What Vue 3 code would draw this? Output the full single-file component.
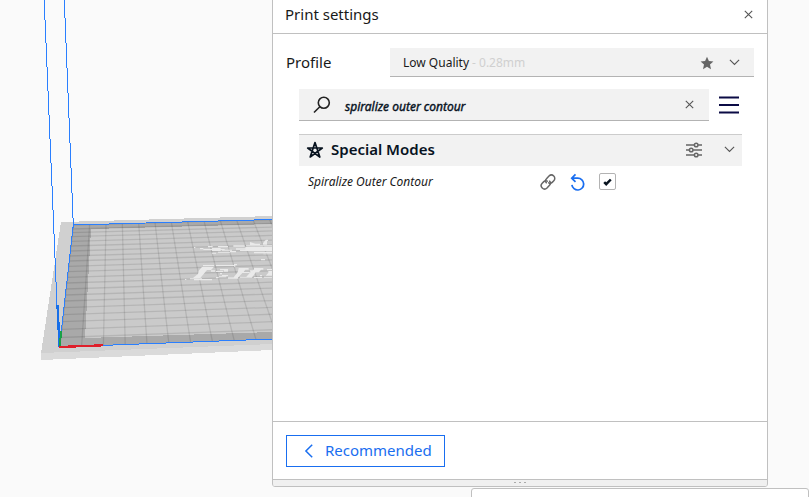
<script setup>
const rowYs = [225, 229, 232.7, 236.7, 241.3, 246, 251, 256, 261, 266.3, 271.7, 277.3, 283, 289, 295, 301, 307.7, 314.7, 321.7, 329.3, 337.5]
const rows = rowYs.map((y) => ({
  x1: 73 - ((y - 225) / 122) * 13.5,
  y1: y,
  x2: 272,
  y2: 219.5 + (y - 225) * 0.98
}))
const cols = Array.from({ length: 13 }, (_, k) => ({
  x1: 73.3 + 16.35 * k,
  y1: 225 - 0.45 * k,
  x2: 59.8 + 21.8 * k,
  y2: 347 - 0.82 * k
}))
</script>

<template>
  <div class="stage">
    <svg class="viewport" width="273" height="497" viewBox="0 0 273 497">
      <g shape-rendering="crispEdges">
        <polygon points="41,352 273,343 273,350 41,360" fill="#dadada" />
        <polygon points="61,222 273,216 273,344 41,353" fill="#d0d0d0" />
        <polygon points="73,225 273,219.5 273,339 59.5,347" fill="#a9a9a9" />
        <polygon points="91,229 273,224 273,332 85,338" fill="#cacaca" />
      </g>
      <clipPath id="bed"><polygon points="73,225 273,219.5 273,339 59.5,347" /></clipPath>
      <g clip-path="url(#bed)" stroke="#000" stroke-opacity="0.1" stroke-width="1.3">
        <line v-for="(l, i) in rows" :key="'r' + i" v-bind="l" />
        <line v-for="(l, i) in cols" :key="'c' + i" v-bind="l" />
      </g>
      <g transform="translate(150 200) scale(.33333)" fill="#eaeaea">
        <path d="M132 141h4v3h-4zM150 144h10v4h-10zM174 138h14v4h-14zM204 138h30v4h-30zM160 147h64v3h-64zM186 144h26v9h-26zM186 158h12v3h-12zM204 155h36v3h-36zM216 149h30v3h-30zM240 153h18v4h-18zM250 136h34v4h-34zM258 145h30v4h-30zM270 150h96v3h-96zM286 141h80v9h-80zM300 126l16 5v4h-16zM316 131h14v4h-14zM338 131l6-8 4-4h6v4h-3v11h-13zM288 136h78v3h-78zM312 156h54v4h-54zM340 161h26v2h-26zM333 177h12v4h-12z" />
        <path d="M159 195h33v4h-33zM198 195h54v3h-54zM252 192h9v4h-5v4h-4zM156 201h36l-9 9h-12l-20 24h-22l15-12 2-10zM105 237h4v3h-4zM120 235h36v3h-36zM132 237h54v4h-54zM183 211h12v4h-12zM210 207h24v4h-24zM198 213h22v3h-22zM222 211h12v4h-12zM210 219h6v4h-6zM216 225h18v3h-18zM198 231h8v4h-8zM207 229h22v3h-22zM234 232h30v4h-30zM266 204h30v5h-10l-5 6h18v4h-22l-12 13h-14l12-15zM300 211h12v4h-12zM312 204h28v5h-7l-6 8h-10l-9 13h-19l13-14 10-8zM330 225h6v4h-6zM270 230h36v3h-36zM312 231h24v3h-24zM351 207h15v4h-15zM355 213h11v14h-19l8-9zM342 230h24v3h-24z" />
      </g>
      <g fill="none" stroke="#2a7fff" stroke-width="1" shape-rendering="crispEdges">
        <path d="M44.2 0L58.7 346M64.3 0L73.3 225L59.5 347L273 339M73 225L273 219.5" />
      </g>
      <g fill="none" shape-rendering="crispEdges">
        <path d="M57.5 305L59.5 347" stroke="#176fe8" stroke-width="2.4" />
        <path d="M61 331L60 346" stroke="#1aa146" stroke-width="2" />
        <path d="M59 347L103 345.3" stroke="#df1f2b" stroke-width="2.3" />
      </g>
    </svg>

    <section class="panel">
      <header class="head">
        <span class="title">Print settings</span>
        <svg width="9" height="9" viewBox="0 0 9 9" class="line"><path d="M.8.8l7.4 7.4M8.2.8L.8 8.2" /></svg>
      </header>
      <main class="body">
        <div class="profile">
          <span class="label">Profile</span>
          <div class="combo">
            <span class="quality">Low Quality</span><span class="layer">- 0.28mm</span>
            <svg class="fav" width="14" height="14" viewBox="0 0 14 14"><path d="M7 .8l1.9 4.3 4.5.4-3.4 3 1 4.7L7 10.8 3 13.2l1-4.7-3.4-3 4.5-.4z" fill="#666" /></svg>
            <svg class="line" width="11" height="7" viewBox="0 0 11 7"><path d="M.9.9l4.6 4.6L10.1.9" /></svg>
          </div>
        </div>
        <div class="searchrow">
          <div class="search">
            <svg width="18" height="18" viewBox="0 0 18 18" fill="none" stroke="#222" stroke-width="1.6"><circle cx="10.8" cy="6.8" r="5.5" /><path d="M6.8 10.8L1 16.5" /></svg>
            <span class="query">spiralize outer contour</span>
            <svg width="9" height="9" viewBox="0 0 9 9" class="line"><path d="M.8.8l7.4 7.4M8.2.8L.8 8.2" /></svg>
          </div>
          <svg width="20" height="18" viewBox="0 0 20 18" fill="none" stroke="#0b0b45" stroke-width="2"><path d="M0 1.5h20M0 9h20M0 16.5h20" /></svg>
        </div>
        <div class="category">
          <svg width="18" height="18" viewBox="0 0 18 18" fill="none" stroke="#08131f" stroke-width="1.7" stroke-linejoin="round"><path d="M9 1.6L4.2 16L16.3 7H1.7L13.8 16z" /></svg>
          <span class="catname">Special Modes</span>
          <svg class="sliders" width="16" height="16" viewBox="0 0 16 16" fill="none" stroke="#666" stroke-width="1.5">
            <path d="M0 3h8.3M12.2 3H16M0 8h3.3M7.2 8H16M0 13h8.3M12.2 13H16" />
            <circle cx="10.2" cy="3" r="1.8" /><circle cx="5.2" cy="8" r="1.8" /><circle cx="10.2" cy="13" r="1.8" />
          </svg>
          <svg class="line" width="11" height="7" viewBox="0 0 11 7"><path d="M.9.9l4.6 4.6L10.1.9" /></svg>
        </div>
        <div class="setting">
          <span class="name">Spiralize Outer Contour</span>
          <svg width="16" height="16" viewBox="0 0 16 16" fill="none" stroke="#666" stroke-width="1.5" stroke-linecap="round">
            <path d="M6.3 8.8a3 3 0 0 1 .2-4L9 2.1a3.3 3.3 0 0 1 4.8 4.7l-1.6 1.6a3 3 0 0 1-3.500.5" />
            <path d="M9.7 7.2a3 3 0 0 1-.2 4L7 13.9a3.3 3.3 0 0 1-4.8-4.7l1.6-1.6a3 3 0 0 1 3.5-.5" />
          </svg>
          <svg class="reset" width="16" height="18" viewBox="0 0 16 18" fill="none" stroke="#196ef0" stroke-width="1.7"><path d="M1.8 5.2h6a5.9 5.9 0 1 1-5.9 6.6M5.5 1.3L1.7 5.2l3.8 3.7" /></svg>
          <span class="check"><svg width="9" height="8" viewBox="0 0 9 8"><path d="M1.2 4.2l2 2L7.8 1.5" fill="none" stroke="#08131f" stroke-width="2.5" /></svg></span>
        </div>
      </main>
      <footer class="foot">
        <button class="rec">
          <svg width="9" height="14" viewBox="0 0 9 14" fill="none" stroke="#196ef0" stroke-width="1.5"><path d="M8.2.7L1.9 7l6.3 6.3" /></svg>
          <span class="reclabel">Recommended</span>
        </button>
      </footer>
      <div class="grip"><i /><i /><i /></div>
    </section>
    <div class="popup" />
  </div>
</template>

<style>
body { margin: 0; overflow: hidden; }
</style>

<style scoped>
* { box-sizing: border-box; }
svg { display: block; flex: none; }
span { white-space: nowrap; }
.stage { position: relative; width: 809px; height: 497px; overflow: hidden; background: #fafafa; font-family: "Noto Sans", sans-serif; color: #191919; }
.viewport { position: absolute; left: 0; top: 0; }
.panel { position: absolute; left: 272px; top: -4px; width: 496px; height: 491px; display: flex; flex-direction: column; background: #fff; border: 1px solid #c0c0c0; border-radius: 3px; overflow: hidden; }
.line { fill: none; stroke: #555; stroke-width: 1.1; }
.head { height: 37px; flex: none; display: flex; align-items: center; justify-content: space-between; padding: 0 14px 0 12px; border-bottom: 1px solid #c0c0c0; }
.head .line { margin-top: -1px; }
.title { font-size: 15px; line-height: 20px; padding-bottom: 2px; }
.body { flex: 1; padding: 14px 13px 0; }
.profile { display: flex; align-items: center; height: 29px; }
.label { width: 104px; font-size: 15px; line-height: 20px; padding-bottom: 2px; }
.combo { flex: 1; height: 29px; display: flex; align-items: center; padding: 0 14px 0 13px; background: #f2f2f2; border-bottom: 1px solid #b3b3b3; font-size: 12px; }
.layer { margin-left: 3px; color: #d0d0d0; }
.fav { margin: 1px 15px 0 auto; }
.searchrow { display: flex; align-items: center; gap: 10px; margin: 12px 0 0 13px; }
.search { width: 410px; height: 32px; display: flex; align-items: center; padding: 0 15px 0 14px; background: #f2f2f2; border-bottom: 1px solid #b3b3b3; }
.search svg:last-child { margin-top: -1px; }
.query { flex: 1; margin-left: 14px; padding-top: 5px; font-size: 12px; line-height: 16px; font-style: italic; color: #08131f; -webkit-text-stroke: 0.4px #08131f; }
.category { display: flex; align-items: center; width: 443px; height: 32px; margin: 13px 0 0 13px; padding: 0 7px 2px; background: #f2f2f2; border-top: 1px solid #ccc; }
.catname { margin-left: 7px; font-size: 15px; line-height: 20px; padding-bottom: 2px; font-weight: 600; color: #08131f; }
.sliders { margin: 0 22px 0 auto; }
.setting { display: flex; align-items: center; height: 31px; margin-left: 22px; }
.name { width: 232px; font-size: 12px; font-style: italic; }
.reset { margin: 0 13px 0 14px; }
.check { width: 17px; height: 17px; display: flex; align-items: center; justify-content: center; border: 1px solid #b3b3b3; border-radius: 2px; }
.foot { height: 59px; flex: none; border-top: 1px solid #c0c0c0; padding: 13px 13px 0; }
.rec { width: 159px; height: 32px; display: flex; align-items: center; gap: 12px; padding: 0 0 0 17px; border: 1px solid #196ef0; background: #fff; color: #196ef0; font: 15px/20px "Noto Sans", sans-serif; }
.reclabel { padding-bottom: 2px; }
.grip { height: 6px; flex: none; display: flex; justify-content: center; gap: 2px; padding-top: 2px; background: #f0f0f0; box-shadow: 0 -1px #c0c0c0; }
.grip i { width: 2px; height: 1px; margin: 0 .5px; background: #aaa; }
.popup { position: absolute; left: 471px; top: 488px; width: 338px; height: 20px; background: #fff; border: 1px solid #c0c0c0; border-radius: 3px; }
</style>
